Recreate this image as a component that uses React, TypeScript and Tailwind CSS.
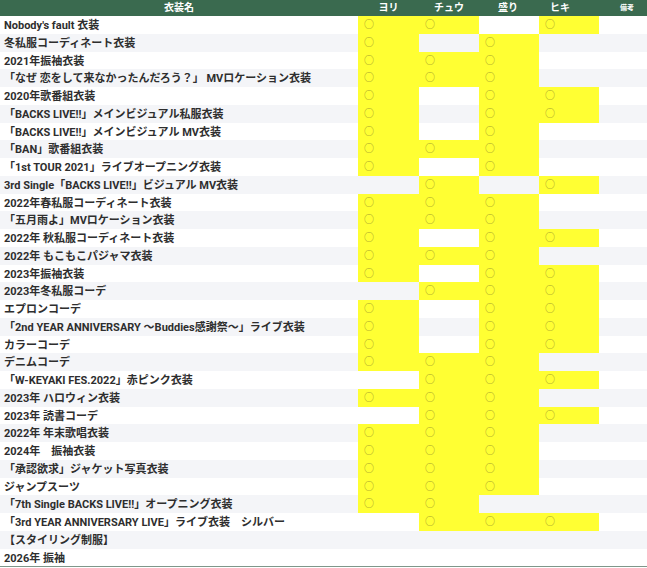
import React from "react";

// ヨリ / チュウ / 盛り / ヒキ
const ROWS: [string, number[]][] = [
  ["Nobody's fault 衣装", [1, 1, 0, 1]],
  ["冬私服コーディネート衣装", [1, 0, 1, 0]],
  ["2021年振袖衣装", [1, 1, 1, 0]],
  ["「なぜ 恋をして来なかったんだろう？」 MVロケーション衣装", [1, 1, 1, 0]],
  ["2020年歌番組衣装", [1, 0, 1, 1]],
  ["「BACKS LIVE!!」メインビジュアル私服衣装", [1, 0, 1, 1]],
  ["「BACKS LIVE!!」メインビジュアル MV衣装", [1, 0, 1, 0]],
  ["「BAN」歌番組衣装", [1, 1, 1, 0]],
  ["「1st TOUR 2021」ライブオープニング衣装", [1, 0, 1, 0]],
  ["3rd Single「BACKS LIVE!!」ビジュアル MV衣装", [0, 1, 0, 1]],
  ["2022年春私服コーディネート衣装", [1, 1, 1, 0]],
  ["「五月雨よ」MVロケーション衣装", [1, 1, 1, 0]],
  ["2022年 秋私服コーディネート衣装", [1, 0, 1, 1]],
  ["2022年 もこもこパジャマ衣装", [1, 1, 1, 0]],
  ["2023年振袖衣装", [1, 0, 1, 1]],
  ["2023年冬私服コーデ", [0, 1, 1, 1]],
  ["エプロンコーデ", [1, 0, 1, 1]],
  ["「2nd YEAR ANNIVERSARY 〜Buddies感謝祭〜」ライブ衣装", [1, 0, 1, 1]],
  ["カラーコーデ", [1, 0, 1, 1]],
  ["デニムコーデ", [1, 1, 1, 0]],
  ["「W-KEYAKI FES.2022」赤ピンク衣装", [0, 1, 1, 1]],
  ["2023年 ハロウィン衣装", [1, 1, 1, 0]],
  ["2023年 読書コーデ", [0, 1, 1, 1]],
  ["2022年 年末歌唱衣装", [1, 1, 1, 0]],
  ["2024年　振袖衣装", [1, 1, 1, 0]],
  ["「承認欲求」ジャケット写真衣装", [1, 1, 1, 0]],
  ["ジャンプスーツ", [1, 1, 1, 0]],
  ["「7th Single BACKS LIVE!!」オープニング衣装", [1, 1, 0, 0]],
  ["「3rd YEAR ANNIVERSARY LIVE」ライブ衣装　シルバー", [0, 1, 1, 1]],
  ["【スタイリング制服】", [0, 0, 0, 0]],
  ["2026年 振袖", [0, 0, 0, 0]],
];

const COLS = "grid grid-cols-[358px_61px_60px_60px_60px_1fr]";

export default function App() {
  return (
    <div
      className="w-[647px] h-[568px] overflow-hidden bg-white"
      style={{ fontFamily: 'Roboto, "Noto Sans CJK JP", sans-serif' }}
    >
      {/* header */}
      <div className={`${COLS} h-[16px] bg-[#3a6a4f] text-white font-bold text-[10px] leading-[16px]`}>
        <div className="text-center">衣装名</div>
        <div className="text-center">ヨリ</div>
        <div className="text-center">チュウ</div>
        <div className="text-center pr-[2px]">盛り</div>
        <div className="text-center pr-[18px]">ヒキ</div>
        <div className="pl-[8px] text-center text-[7px]">備考</div>
      </div>

      {ROWS.map(([name, marks], i) => (
        <div
          key={name}
          className={`${COLS} h-[17.75px] ${i % 2 ? "bg-[#f4f5f8]" : "bg-white"}`}
        >
          <div className="pl-[4px] pt-px font-bold text-[11px] leading-[17.75px] text-[#2e2e2e] whitespace-nowrap overflow-hidden">
            {name}
          </div>
          {marks.map((m, j) => (
            <div
              key={j}
              className={`pl-[6px] text-[10px] leading-[17.75px] text-[#a39c2c] ${m ? "bg-[#ffff33]" : ""}`}
            >
              {m ? "○" : ""}
            </div>
          ))}
          <div />
        </div>
      ))}

      <div className="h-px bg-[#7f968a]" />
    </div>
  );
}
